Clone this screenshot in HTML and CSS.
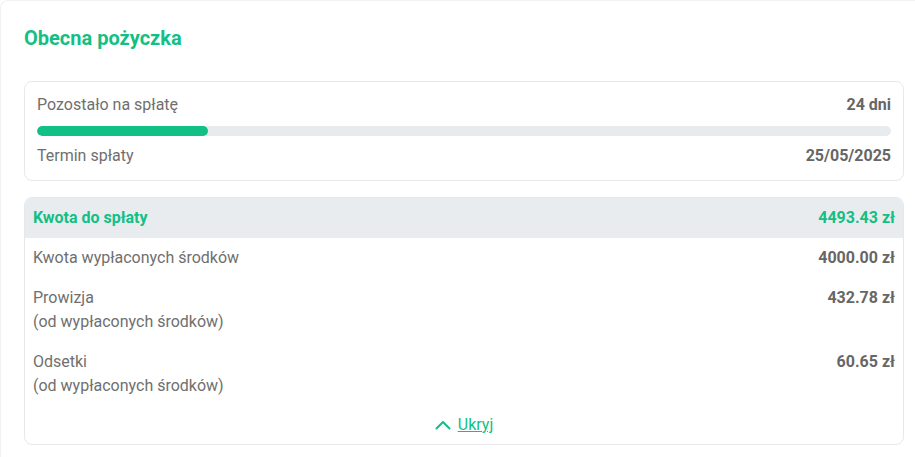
FILE: index.html
```html
<!DOCTYPE html>
<html lang="pl">
<head>
    <meta charset="UTF-8">
    <meta name="viewport" content="width=device-width, initial-scale=1.0">
    <title>Obecna pożyczka</title>
    <link rel="stylesheet" href="styles.css">
</head>
<body>
    <div class="card">
        <h2 class="title">Obecna pożyczka</h2>

        <div class="box status">
            <div class="row">
                <span class="label">Pozostało na spłatę</span>
                <span class="value">24 dni</span>
            </div>
            <div class="progress">
                <div class="progress-fill" style="width: 20%"></div>
            </div>
            <div class="row">
                <span class="label">Termin spłaty</span>
                <span class="value">25/05/2025</span>
            </div>
        </div>

        <div class="box details">
            <div class="row total">
                <span class="label">Kwota do spłaty</span>
                <span class="value">4493.43 zł</span>
            </div>
            <div class="row">
                <span class="label">Kwota wypłaconych środków</span>
                <span class="value">4000.00 zł</span>
            </div>
            <div class="row">
                <span class="label">Prowizja<br>(od wypłaconych środków)</span>
                <span class="value">432.78 zł</span>
            </div>
            <div class="row">
                <span class="label">Odsetki<br>(od wypłaconych środków)</span>
                <span class="value">60.65 zł</span>
            </div>
            <div class="toggle">
                <svg width="16" height="10" viewBox="0 0 16 10" fill="none">
                    <path d="M1.5 8.5 L8 2 L14.5 8.5" stroke="#12bf85" stroke-width="2" stroke-linecap="round" stroke-linejoin="round"/>
                </svg>
                <a href="#" class="toggle-link">Ukryj</a>
            </div>
        </div>
    </div>
</body>
</html>
```

FILE: styles.css
```css
body {
    margin: 0;
    padding: 0;
    background-color: #fff;
    font-family: Roboto, "Liberation Sans", sans-serif;
    font-size: 16px;
    line-height: 24px;
    color: #6f6f6f;
}
.card {
    border: 1px solid #f1f2f3;
    border-right: none;
    border-radius: 8px 0 0 0;
    padding: 23px 11px 13px 23px;
    min-height: 420px;
}
.title {
    margin: 0 0 29px 0;
    font-size: 20px;
    line-height: 28px;
    font-weight: 700;
    color: #12bf85;
}
.box {
    border: 1px solid #e6e8eb;
    border-radius: 8px;
    background-color: #fff;
}
.status {
    padding: 11px 12px 12px 12px;
    margin-bottom: 16px;
}
.row {
    display: flex;
    justify-content: space-between;
    align-items: flex-start;
}
.value {
    font-weight: 700;
    color: #666;
}
.progress {
    height: 10px;
    margin: 9px 0 8px 0;
    border-radius: 5px;
    background-color: #e8ebee;
    overflow: hidden;
}
.progress-fill {
    height: 100%;
    border-radius: 5px;
    background-color: #12bf85;
}
.details {
    overflow: hidden;
}
.details .row {
    padding: 8px 8px;
}
.details .total {
    padding: 8px 8px 8px 8px;
    background-color: #e9ecef;
}
.total .label, .total .value {
    font-weight: 700;
    color: #12bf85;
}
.toggle {
    display: flex;
    justify-content: center;
    align-items: center;
    gap: 7px;
    padding: 7px 0 7px 0;
}
.toggle-link {
    color: #12bf85;
    text-decoration: underline;
}
```
